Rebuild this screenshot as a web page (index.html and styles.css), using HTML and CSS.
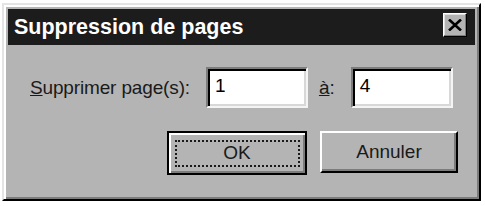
FILE: index.html
```html
<!DOCTYPE html>
<html lang="fr">
<head>
<meta charset="utf-8">
<link rel="stylesheet" href="styles.css">
</head>
<body>
<div class="window">
  <div class="titlebar">
    <span class="title">Suppression de pages</span>
    <button class="close" aria-label="Fermer">
      <svg width="14" height="12" viewBox="0 0 14 12"><path d="M1 0.5 L13 11.5 M13 0.5 L1 11.5" stroke="#000" stroke-width="2.6" fill="none"/></svg>
    </button>
  </div>
  <div class="content">
    <div class="row fields">
      <label class="lbl lbl-from"><u>S</u>upprimer page(s):</label>
      <div class="field field-from">1</div>
      <label class="lbl lbl-to"><u>à</u>:</label>
      <div class="field field-to">4</div>
    </div>
    <div class="row buttons">
      <button class="btn btn-default"><span class="focus">OK</span></button>
      <button class="btn btn-cancel">Annuler</button>
    </div>
  </div>
</div>
</body>
</html>
```
FILE: styles.css
```css
html, body {
  margin: 0;
  padding: 0;
  background: #ffffff;
}

body {
  font-family: "Liberation Sans", Arial, sans-serif;
}

.window {
  margin: 3px 0 0 2px;
  width: 479px;
  height: 198px;
  box-sizing: border-box;
  background: #b4b4b4;
  border: 2px solid;
  border-color: #e4e4e4 #000 #000 #e4e4e4;
  box-shadow: inset 2px 2px 0 #ffffff, inset -2px -2px 0 #7c7c7c;
  padding: 4px;
  display: flex;
  flex-direction: column;
}

.titlebar {
  height: 36px;
  background: #1c1c1c;
  display: flex;
  align-items: flex-start;
  justify-content: space-between;
  padding: 0 8px 0 6px;
}

.title {
  color: #ffffff;
  font-weight: bold;
  font-size: 21.5px;
  line-height: 36px;
}

.close {
  margin-top: 4px;
  width: 24px;
  height: 24px;
  box-sizing: border-box;
  padding: 0;
  background: #b4b4b4;
  border: 1px solid;
  border-color: #ffffff #000 #000 #ffffff;
  box-shadow: inset -1px -1px 0 #7c7c7c, inset 1px 1px 0 #e0e0e0;
  display: flex;
  align-items: center;
  justify-content: center;
}

.content {
  flex: 1;
  padding: 22px 0 0 22px;
}

.row {
  display: flex;
  align-items: center;
}

.lbl {
  font-size: 19px;
  color: #1a1a1a;
}

.lbl-from {
  margin-right: 16px;
  letter-spacing: -0.15px;
}

.lbl-to {
  margin: 0 16px 0 11px;
}

.field {
  width: 102px;
  height: 41px;
  box-sizing: border-box;
  background: #ffffff;
  border: 2px solid;
  border-color: #7c7c7c #f4f4f4 #f4f4f4 #7c7c7c;
  box-shadow: inset 2px 2px 0 #000, inset -2px -2px 0 #d8d8d8;
  font-size: 19px;
  padding: 6px 0 0 7px;
  color: #000;
}

.buttons {
  justify-content: flex-end;
  margin-top: 23px;
  padding-right: 17px;
  gap: 13px;
}

.btn {
  font-family: "Liberation Sans", Arial, sans-serif;
  font-size: 19px;
  color: #1a1a1a;
  background: #b4b4b4;
  box-sizing: border-box;
  padding: 0;
  display: flex;
  align-items: center;
  justify-content: center;
}

.btn-default {
  width: 140px;
  height: 44px;
  border: 2px solid #000;
  box-shadow: inset 2px 2px 0 #ffffff, inset -2px -2px 0 #7c7c7c;
}

.focus {
  width: 125px;
  height: 27px;
  box-sizing: border-box;
  border: 2px dotted #1a1a1a;
  display: flex;
  align-items: center;
  justify-content: center;
}

.btn-cancel {
  width: 138px;
  height: 42px;
  margin-top: -2px;
  border: 2px solid;
  border-color: #ffffff #000 #000 #ffffff;
  box-shadow: inset -2px -2px 0 #7c7c7c;
}
```
